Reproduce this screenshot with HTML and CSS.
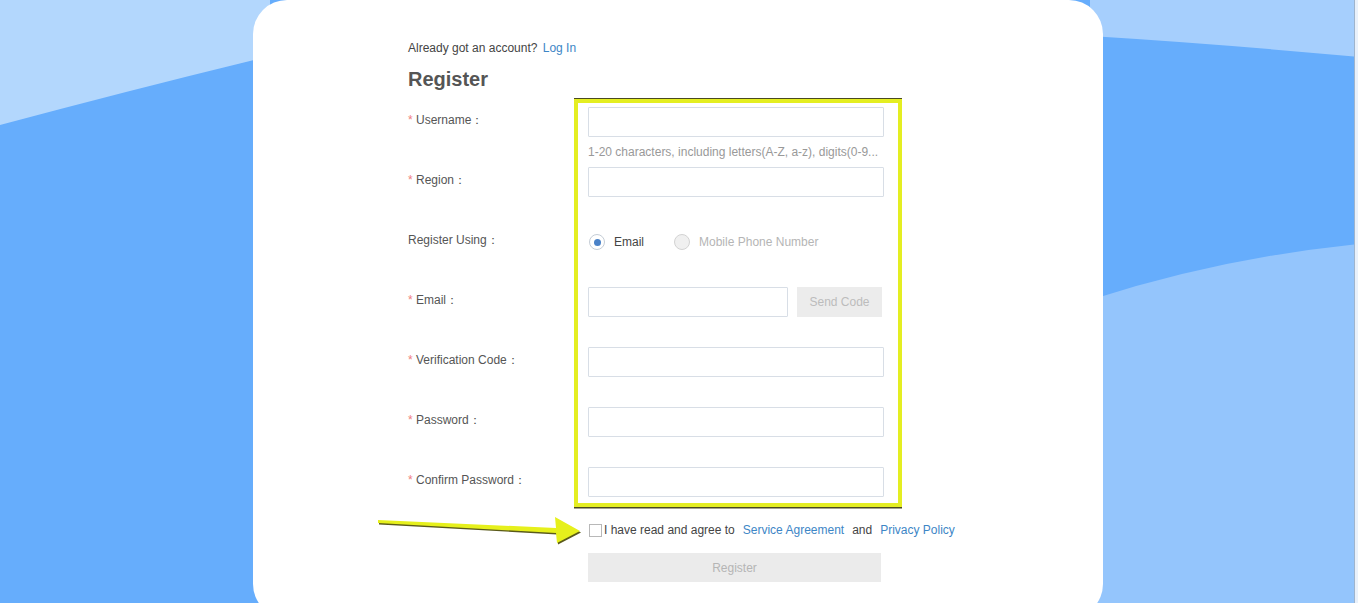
FILE: index.html
```html
<!DOCTYPE html>
<html lang="en">
  <head>
    <meta charset="UTF-8" />
    <meta name="viewport" content="width=device-width, initial-scale=1.0" />
    <title>Register</title>
    <link rel="stylesheet" href="styles.css">
  </head>
  <body>
    <div id="page">
      <svg class="waves" viewBox="0 0 1358 603" preserveAspectRatio="none">
        <rect width="1358" height="603" fill="#66adfc" />
        <path d="M0 0 H270 V56 Q130 90 0 125 Z" fill="#b3d7fd" />
        <path d="M1090 0 H1358 V57 Q1220 44 1090 36 Z" fill="#a6cffd" />
        <path d="M1090 300 Q1220 258 1358 244 V603 H1090 Z" fill="#94c5fc" />
      </svg>

      <div class="card">
        <div class="content">
          <p class="already">Already got an account? <a href="#" class="link">Log In</a></p>
          <h1 class="title">Register</h1>

          <form class="form">
            <div class="item item-hint">
              <label class="label"><span class="req">*</span> Username：</label>
              <div class="field">
                <input class="input" type="text" />
                <div class="hint">1-20 characters, including letters(A-Z, a-z), digits(0-9...</div>
              </div>
            </div>
            <div class="item">
              <label class="label"><span class="req">*</span> Region：</label>
              <div class="field"><input class="input" type="text" /></div>
            </div>
            <div class="item">
              <label class="label">Register Using：</label>
              <div class="field radios">
                <span class="radio checked"><span class="circle"></span>Email</span>
                <span class="radio disabled"><span class="circle"></span>Mobile Phone Number</span>
              </div>
            </div>
            <div class="item">
              <label class="label"><span class="req">*</span> Email：</label>
              <div class="field code-row">
                <input class="input short" type="text" />
                <button type="button" class="btn-code">Send Code</button>
              </div>
            </div>
            <div class="item">
              <label class="label"><span class="req">*</span> Verification Code：</label>
              <div class="field"><input class="input" type="text" /></div>
            </div>
            <div class="item">
              <label class="label"><span class="req">*</span> Password：</label>
              <div class="field"><input class="input" type="password" /></div>
            </div>
            <div class="item last">
              <label class="label"><span class="req">*</span> Confirm Password：</label>
              <div class="field"><input class="input" type="password" /></div>
            </div>

            <div class="agree">
              <span class="box"></span>
              <span>I have read and agree to</span>
              <a href="#" class="link">Service Agreement</a>
              <span>and</span>
              <a href="#" class="link">Privacy Policy</a>
            </div>
            <button type="button" class="btn-submit">Register</button>
          </form>
        </div>

        <!-- screenshot annotations -->
        <div class="highlight"></div>
        <svg class="arrow" width="220" height="40" viewBox="0 0 220 40">
          <path d="M2 11 L180 19 L179 8 L204 22 L181 34 L180 24 L2 14 Z" fill="#5a5a1a" transform="translate(1,1.5)" />
          <path d="M2 11 L180 19 L179 8 L204 22 L181 34 L180 24 L2 14 Z" fill="#e6f01c" />
        </svg>
      </div>
    </div>
  </body>
</html>
```

FILE: styles.css
```css
body {
  margin: 0;
  padding: 0;
  height: 603px;
  overflow: hidden;
  font-family: "Liberation Sans", Arial, sans-serif;
  font-size: 12px;
  color: #555;
  background-color: #e9f1fb;
}

#page {
  position: relative;
  width: 1354px;
  height: 603px;
  border-right: 1px solid #9fb4cc;
  display: flex;
  justify-content: center;
  overflow: hidden;
}

.waves {
  position: absolute;
  top: 0;
  left: 0;
  width: 1358px;
  height: 603px;
}

.card {
  position: relative;
  width: 850px;
  height: 618px;
  margin-left: 2px;
  background-color: #fff;
  border-radius: 34px;
  box-sizing: border-box;
  padding: 40px 0 0 155px;
}

.already {
  margin: 0 0 10px;
  line-height: 16px;
  color: #444;
}

.already .link {
  margin-left: 2px;
}

.link {
  color: #3d86c6;
  text-decoration: none;
}

.title {
  margin: 0 0 15px;
  font-size: 20px;
  line-height: 26px;
  font-weight: bold;
  color: #555;
}

.form {
  width: 560px;
}

.item {
  display: grid;
  grid-template-columns: 180px 296px;
  margin-bottom: 30px;
}

.item.item-hint,
.item.last {
  margin-bottom: 0;
}

.label {
  line-height: 27px;
  color: #555;
  white-space: nowrap;
}

.req {
  color: #f08080;
}

.input {
  display: block;
  width: 296px;
  height: 30px;
  box-sizing: border-box;
  margin: 0;
  border: 1px solid #d8dee6;
  border-radius: 1px;
  background: #fff;
  outline: none;
}

.input.short {
  width: 200px;
}

.hint {
  line-height: 30px;
  color: #999;
  white-space: nowrap;
}

.radios {
  display: flex;
  align-items: center;
  height: 30px;
}

.radio {
  display: flex;
  align-items: center;
  color: #444;
  margin-right: 29px;
  padding-left: 1px;
}

.radio .circle {
  width: 14px;
  height: 14px;
  border: 1px solid #c5cdd6;
  border-radius: 50%;
  margin-right: 9px;
  background: #fff;
  display: flex;
  align-items: center;
  justify-content: center;
}

.radio.checked .circle::after {
  content: "";
  width: 7px;
  height: 7px;
  border-radius: 50%;
  background: #4a82c8;
}

.radio.disabled {
  color: #b5b5b5;
}

.radio.disabled .circle {
  background: #f0f0f0;
  border-color: #d3d3d3;
}

.code-row {
  display: flex;
  align-items: center;
  gap: 9px;
}

.btn-code {
  width: 85px;
  height: 30px;
  border: none;
  background: #ececec;
  color: #bcbcbc;
  font-family: inherit;
  font-size: 12px;
  padding: 0;
}

.agree {
  display: flex;
  align-items: center;
  margin: 23px 0 0 180px;
  line-height: 20px;
  color: #444;
  white-space: nowrap;
}

.agree .box {
  width: 11px;
  height: 11px;
  border: 1px solid #b8b8b8;
  margin: 0 2px 0 1px;
}

.agree .link {
  margin: 0 8px;
}

.btn-submit {
  display: block;
  width: 293px;
  height: 29px;
  margin: 13px 0 0 180px;
  border: none;
  background: #ebebeb;
  color: #b5b5b5;
  font-family: inherit;
  font-size: 12px;
}

.highlight {
  position: absolute;
  left: 321px;
  top: 99px;
  width: 320px;
  height: 400px;
  border: 4px solid #e4ee22;
  box-shadow: 0 -1px 0 #4a4a20, 0 1.5px 0 #4a4a20;
  pointer-events: none;
}

.arrow {
  position: absolute;
  left: 123px;
  top: 509px;
}
```
